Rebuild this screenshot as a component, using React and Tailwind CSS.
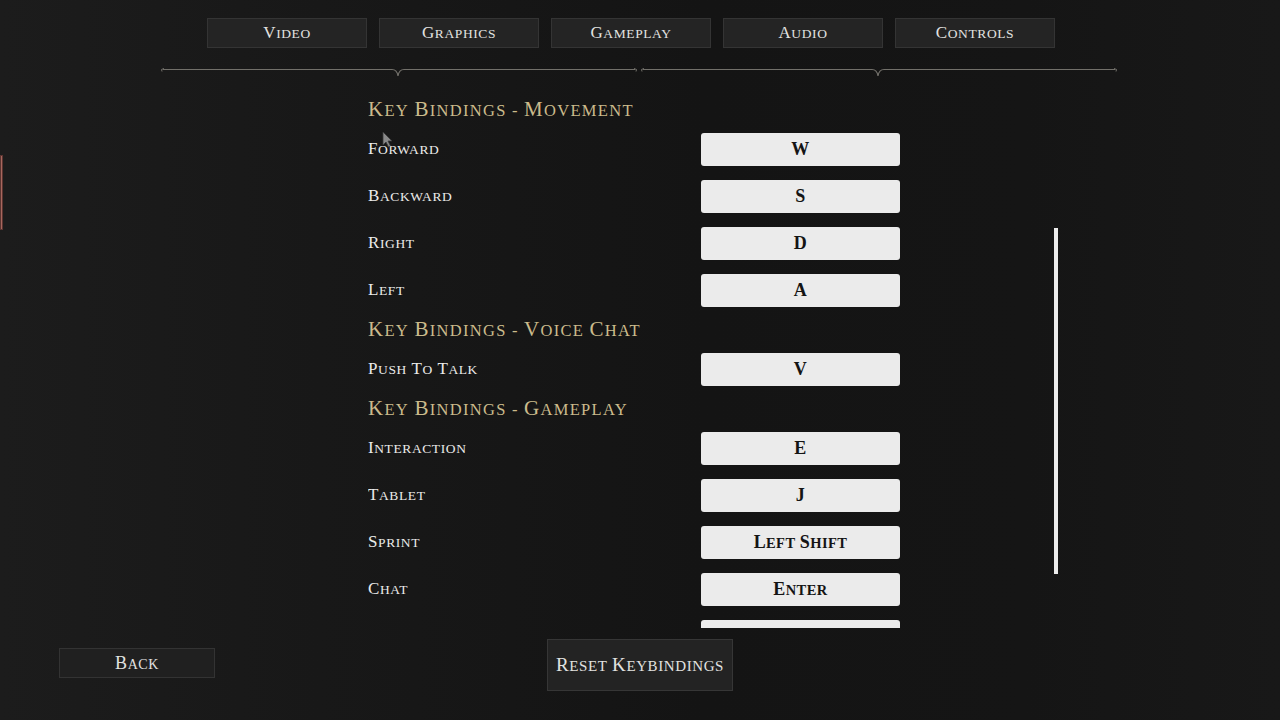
import { Fragment } from 'react'

const tabs = ['Video', 'Graphics', 'Gameplay', 'Audio', 'Controls']

const sections = [
  {
    title: 'Key Bindings - Movement',
    rows: [
      ['Forward', 'W'],
      ['Backward', 'S'],
      ['Right', 'D'],
      ['Left', 'A'],
    ],
  },
  {
    title: 'Key Bindings - Voice Chat',
    rows: [['Push To Talk', 'V']],
  },
  {
    title: 'Key Bindings - Gameplay',
    rows: [
      ['Interaction', 'E'],
      ['Tablet', 'J'],
      ['Sprint', 'Left Shift'],
      ['Chat', 'Enter'],
      ['', ''],
    ],
  },
]

const serif = "font-['Liberation_Serif','DejaVu_Serif',serif]"

// Trajan-style caps: first letter of each word full size, the rest smaller caps
function SC({ text, big, small, className = '' }) {
  const words = text.split(' ')
  return (
    <span className={`${serif} whitespace-nowrap ${className}`}>
      {words.map((w, i) => (
        <Fragment key={i}>
          {i > 0 && ' '}
          {w === '-' ? (
            <span className={small}>-</span>
          ) : (
            <>
              <span className={big}>{w[0]}</span>
              <span className={`${small} uppercase`}>{w.slice(1)}</span>
            </>
          )}
        </Fragment>
      ))}
    </span>
  )
}

function Divider() {
  // ornamental rule under the tab bar, two halves each with a small notch
  const half = (x0, x1, notch) => (
    <g>
      <path
        d={`M${x0 + 3} 69.5 L${notch - 6} 69.5 Q${notch - 1} 69.5 ${notch} 76 Q${notch + 1} 69.5 ${notch + 6} 69.5 L${x1 - 3} 69.5`}
        stroke="#72706a"
        strokeWidth="1.2"
        fill="none"
      />
      <path d={`M${x0 + 4} 68.5 Q${x0} 69 ${x0 + 2} 71.5`} stroke="#72706a" strokeWidth="1" fill="none" />
      <path d={`M${x1 - 4} 68.5 Q${x1} 69 ${x1 - 2} 71.5`} stroke="#72706a" strokeWidth="1" fill="none" />
    </g>
  )
  return (
    <svg className="block" width="1280" height="24" viewBox="0 60 1280 24">
      {half(160, 638, 398)}
      {half(640, 1118, 878)}
    </svg>
  )
}

function KeyRow({ label, value }) {
  return (
    <div className="flex h-[47px] shrink-0 items-center">
      <div className="w-[333px] -translate-y-px">
        {label && (
          <SC text={label} big="text-[17px]" small="text-[13.5px]" className="tracking-[0.6px] text-[#ebebea]" />
        )}
      </div>
      <div className="flex h-[33px] w-[199px] items-center justify-center rounded-[3px] bg-[#ebebeb]">
        {value && (
          <SC text={value} big="text-[18px]" small="text-[14.5px]" className="font-bold tracking-[0.4px] text-[#141414]" />
        )}
      </div>
    </div>
  )
}

export default function App() {
  return (
    <div className="relative flex h-[720px] w-full flex-col overflow-hidden bg-[linear-gradient(90deg,#1c1c1c_0%,#181818_25%,#141414_55%,#151515_80%,#181818_100%)]">
      <div className="flex gap-3 pl-[207px] pt-[18px]">
        {tabs.map((t) => (
          <div
            key={t}
            className="flex h-[30px] w-[160px] items-center justify-center border border-[#343434] bg-[#242424]"
          >
            <SC text={t} big="text-[17px]" small="text-[13.5px]" className="tracking-[0.6px] text-[#e2e2e0]" />
          </div>
        ))}
      </div>

      <div className="mt-[12px] h-[24px]">
        <Divider />
      </div>

      <div className="ml-[368px] mt-[10px] flex h-[534px] shrink-0">
        <div className="flex w-[532px] flex-col overflow-hidden">
          {sections.map((s) => (
            <div key={s.title} className="flex flex-col">
              <div className="flex h-[32px] shrink-0 items-center">
                <SC text={s.title} big="text-[21px]" small="text-[16.5px]" className="tracking-[1.3px] text-[#cbbb8c]" />
              </div>
              {s.rows.map(([l, v], i) => (
                <KeyRow key={i} label={l} value={v} />
              ))}
            </div>
          ))}
        </div>
        <div className="ml-[154px] pt-[134px]">
          <div className="h-[346px] w-[4px] bg-[#ececec]" />
        </div>
      </div>

      <div className="flex items-start">
        <div className="ml-[59px] mt-[20px] flex h-[30px] w-[156px] items-center justify-center border border-[#333] bg-[#202020]">
          <SC text="Back" big="text-[18px]" small="text-[14px]" className="tracking-[0.6px] text-[#e2e2e0]" />
        </div>
        <div className="ml-[332px] mt-[11px] flex h-[52px] w-[186px] items-center justify-center border border-[#363636] bg-[#232323]">
          <SC text="Reset Keybindings" big="text-[19px]" small="text-[15px]" className="tracking-[0.6px] text-[#e2e2e0]" />
        </div>
      </div>

      {/* selection marker on the left edge */}
      <div className="absolute left-0 top-[155px] h-[75px] w-[3px] border border-[#5a3430] bg-[#a8675e]" />

      {/* mouse pointer */}
      <svg className="absolute left-[382px] top-[131px]" width="12" height="18" viewBox="0 0 12 18">
        <path d="M1 1 L1 14 L4 11 L6.5 16 L8.5 15 L6 10 L10 10 Z" fill="#8a8a8a" stroke="#3a3a3a" strokeWidth="0.8" />
      </svg>
    </div>
  )
}
